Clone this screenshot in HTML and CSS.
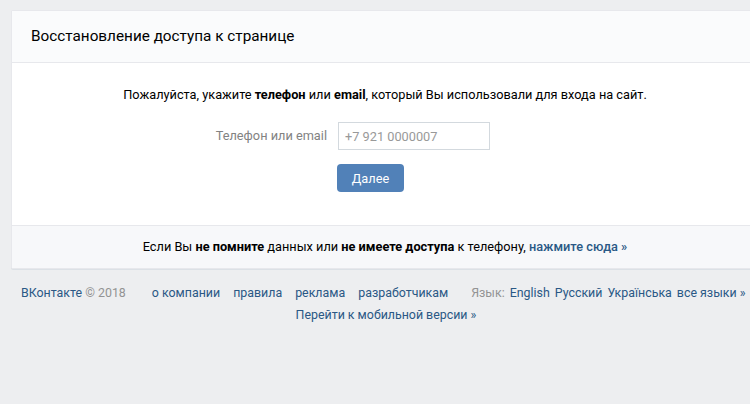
FILE: index.html
```html
<!DOCTYPE html>
<html lang="ru">
<head>
    <meta charset="UTF-8">
    <title>Восстановление доступа к странице</title>
    <link rel="stylesheet" href="styles.css">
</head>
<body>
    <div class="page">
        <div class="card">
            <div class="card-header">Восстановление доступа к странице</div>

            <div class="card-body">
                <p class="intro">Пожалуйста, укажите <b>телефон</b> или <b>email</b>, который Вы использовали для входа на сайт.</p>

                <div class="form">
                    <label class="form-label" for="login">Телефон или email</label>
                    <input class="form-input" type="text" id="login" placeholder="+7 921 0000007">
                    <span></span>
                    <button class="btn">Далее</button>
                </div>
            </div>

            <div class="card-bottom">
                Если Вы <b>не помните</b> данных или <b>не имеете доступа</b> к телефону, <a href="#" class="link-bold">нажмите сюда »</a>
            </div>
        </div>

        <footer class="footer">
            <div class="footer-row">
                <div class="copy"><a href="#">ВКонтакте</a> © 2018</div>
                <nav class="footer-links">
                    <a href="#">о компании</a>
                    <a href="#">правила</a>
                    <a href="#">реклама</a>
                    <a href="#">разработчикам</a>
                </nav>
                <div class="lang">
                    <span>Язык:</span>
                    <a href="#">English</a>
                    <a href="#">Русский</a>
                    <a href="#">Українська</a>
                    <a href="#">все языки »</a>
                </div>
            </div>
            <div class="footer-mobile">
                <a href="#">Перейти к мобильной версии »</a>
            </div>
        </footer>
    </div>
</body>
</html>
```

FILE: styles.css
```css
/* Page */
html, body {
    overflow: hidden;
}

body {
    margin: 0;
    background-color: #edeef0;
    font-family: Roboto, "Liberation Sans", sans-serif;
    font-size: 12.75px;
    color: #000;
}

a {
    color: #2a5885;
    text-decoration: none;
}

.page {
    width: 748px;
    padding: 10px 0 0 11px;
}

/* Card */
.card {
    background-color: #fff;
    border: 1px solid #e7e8ec;
    border-radius: 2px;
    box-shadow: 0 1px 0 0 #dce1e6;
}

.card-header {
    background-color: #fafbfc;
    border-bottom: 1px solid #e7e8ec;
    height: 51px;
    line-height: 50px;
    padding: 0 19px;
    font-size: 15.3px;
}

.card-body {
    padding: 23px 0 33px;
}

.intro {
    margin: 0;
    text-align: center;
    line-height: 18px;
}

/* Form */
.form {
    display: grid;
    grid-template-columns: 315px 152px;
    column-gap: 11px;
    row-gap: 14px;
    margin-top: 18px;
}

.form-label {
    text-align: right;
    color: #828282;
    line-height: 28px;
}

.form-input {
    height: 28px;
    box-sizing: border-box;
    border: 1px solid #d3d9de;
    border-radius: 0;
    padding: 0 6px;
    font-family: inherit;
    font-size: 12.75px;
    color: #000;
}

.form-input::placeholder {
    color: #999;
}

.btn {
    justify-self: start;
    margin-left: -1px;
    width: 67px;
    height: 28px;
    border: none;
    border-radius: 4px;
    background-color: #5181b8;
    color: #fff;
    font-family: inherit;
    font-size: 12.75px;
    cursor: pointer;
}

/* Bottom strip */
.card-bottom {
    background-color: #f7f8fa;
    border-top: 1px solid #e7e8ec;
    height: 42px;
    line-height: 42px;
    text-align: center;
}

.link-bold {
    font-weight: 500;
}

/* Footer */
.footer {
    padding: 13px 0 0 10px;
    color: #939393;
    font-size: 12.4px;
    white-space: nowrap;
}

.footer-row {
    display: flex;
    line-height: 22px;
}

.copy {
    flex-shrink: 0;
}

.footer-links {
    display: flex;
    gap: 13px;
    margin-left: 26px;
    flex-shrink: 0;
}

.lang {
    margin-left: 23px;
    display: flex;
    gap: 5px;
    flex-shrink: 0;
}

.footer-mobile {
    text-align: center;
    line-height: 22px;
    padding-right: 8px;
}
```
